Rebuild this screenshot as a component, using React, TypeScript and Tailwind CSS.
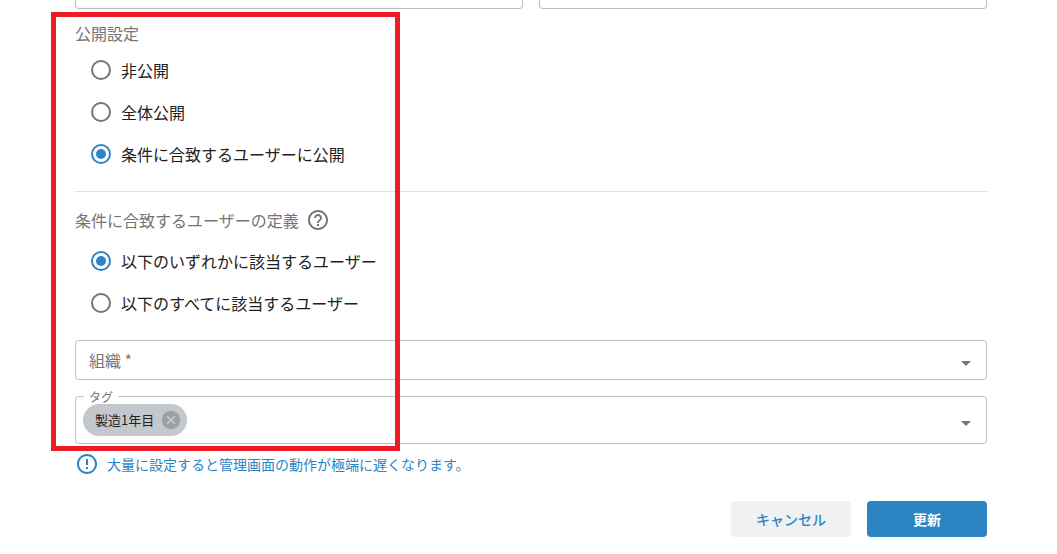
import { useState } from 'react';
import type { ReactNode } from 'react';
import { MdArrowDropDown, MdCancel, MdErrorOutline, MdHelpOutline } from 'react-icons/md';

interface Option {
  value: string;
  label: string;
}

const visibilityOptions: Option[] = [
  { value: 'private', label: '非公開' },
  { value: 'public', label: '全体公開' },
  { value: 'conditional', label: '条件に合致するユーザーに公開' },
];

const matchOptions: Option[] = [
  { value: 'any', label: '以下のいずれかに該当するユーザー' },
  { value: 'all', label: '以下のすべてに該当するユーザー' },
];

interface RadioGroupProps {
  name: string;
  legend: string;
  /** Icono de ayuda junto al título */
  help?: ReactNode;
  options: Option[];
  value: string;
  onChange: (value: string) => void;
}

function RadioGroup({ name, legend, help, options, value, onChange }: RadioGroupProps) {
  return (
    <fieldset>
      <legend className={`flex h-6 items-center gap-[7px] text-[#757575] ${help ? 'mb-2' : 'mb-1'}`}>
        {legend}
        {help}
      </legend>
      <div className="flex flex-col items-start pl-4">
        {options.map((option) => (
          <label key={option.value} className="flex h-[42px] cursor-pointer items-center gap-2.5">
            <input
              type="radio"
              name={name}
              value={option.value}
              checked={value === option.value}
              onChange={() => onChange(option.value)}
              className="size-5 shrink-0 cursor-pointer appearance-none rounded-full border-2 border-[#757575] bg-clip-content p-[3px] checked:border-[#2d84c4] checked:bg-[#2d84c4]"
            />
            <span>{option.label}</span>
          </label>
        ))}
      </div>
    </fieldset>
  );
}

function SelectArrow() {
  return (
    <MdArrowDropDown
      size={24}
      aria-hidden="true"
      className="pointer-events-none absolute inset-y-0 right-2 my-auto box-content pt-1.5 text-[#757575]"
    />
  );
}

export default function App() {
  const [visibility, setVisibility] = useState('conditional');
  const [match, setMatch] = useState('any');
  const [tags, setTags] = useState(['製造1年目']);

  return (
    <main
      lang="ja"
      className="relative bg-white pr-[70px] pb-4 pl-[75px] font-['Noto_Sans_CJK_JP',sans-serif] text-base text-[#212121]"
    >
      <form onSubmit={(e) => e.preventDefault()}>
        <div className="grid grid-cols-2 gap-4">
          <input type="text" aria-label="開始" className="h-[9px] min-w-0 rounded-b border border-t-0 border-[#c0c0c0]" />
          <input type="text" aria-label="終了" className="h-[9px] min-w-0 rounded-b border border-t-0 border-[#c0c0c0]" />
        </div>

        <div className="mt-3">
          <RadioGroup
            name="visibility"
            legend="公開設定"
            options={visibilityOptions}
            value={visibility}
            onChange={setVisibility}
          />
        </div>

        <hr className="my-4 border-[#e0e0e0]" />

        <RadioGroup
          name="match"
          legend="条件に合致するユーザーの定義"
          help={<MdHelpOutline size={24} />}
          options={matchOptions}
          value={match}
          onChange={setMatch}
        />

        {/* 組織 */}
        <div className="relative mt-4 flex h-10 rounded border border-[#c0c0c0]">
          <select
            aria-label="組織"
            required
            defaultValue=""
            className="w-full appearance-none bg-transparent px-[13px] text-[#757575] outline-none"
          >
            <option value="">組織 *</option>
          </select>
          <SelectArrow />
        </div>

        {/* タグ */}
        <div className="relative mt-4 flex h-12 items-center rounded border border-[#c0c0c0] pl-[7px]">
          <label
            htmlFor="tag"
            className="absolute -top-2 left-2 bg-white px-[5px] text-xs leading-4 text-[#757575]"
          >
            タグ
          </label>
          {tags.map((tag) => (
            <span
              key={tag}
              className="z-10 flex h-8 items-center gap-1.5 rounded-full bg-[#c4c8cd] pr-[5px] pl-3 text-[13px]"
            >
              {tag}
              <button
                type="button"
                aria-label={`${tag}を削除`}
                onClick={() => setTags(tags.filter((t) => t !== tag))}
                className="cursor-pointer text-[#9c9fa3]"
              >
                <MdCancel size={22} />
              </button>
            </span>
          ))}
          <select id="tag" defaultValue="" className="h-full flex-1 appearance-none bg-transparent outline-none">
            <option value="" />
          </select>
          <SelectArrow />
        </div>

        <p className="mt-2 flex items-center gap-2 text-sm leading-6 text-[#2d84c4]">
          <MdErrorOutline size={24} />
          大量に設定すると管理画面の動作が極端に遅くなります。
        </p>

        <div className="mt-[25px] flex justify-end gap-4 text-sm">
          <button type="button" className="h-9 w-[120px] cursor-pointer rounded bg-[#eff1f3] font-medium text-[#2d84c4]">
            キャンセル
          </button>
          <button type="submit" className="h-9 w-[120px] cursor-pointer rounded bg-[#2d84c4] font-bold text-white">
            更新
          </button>
        </div>
      </form>

      {/* 強調枠 */}
      <div className="pointer-events-none absolute top-3 left-[51px] z-20 h-[439px] w-[349px] border-5 border-[#ed1c24]" />
    </main>
  );
}
